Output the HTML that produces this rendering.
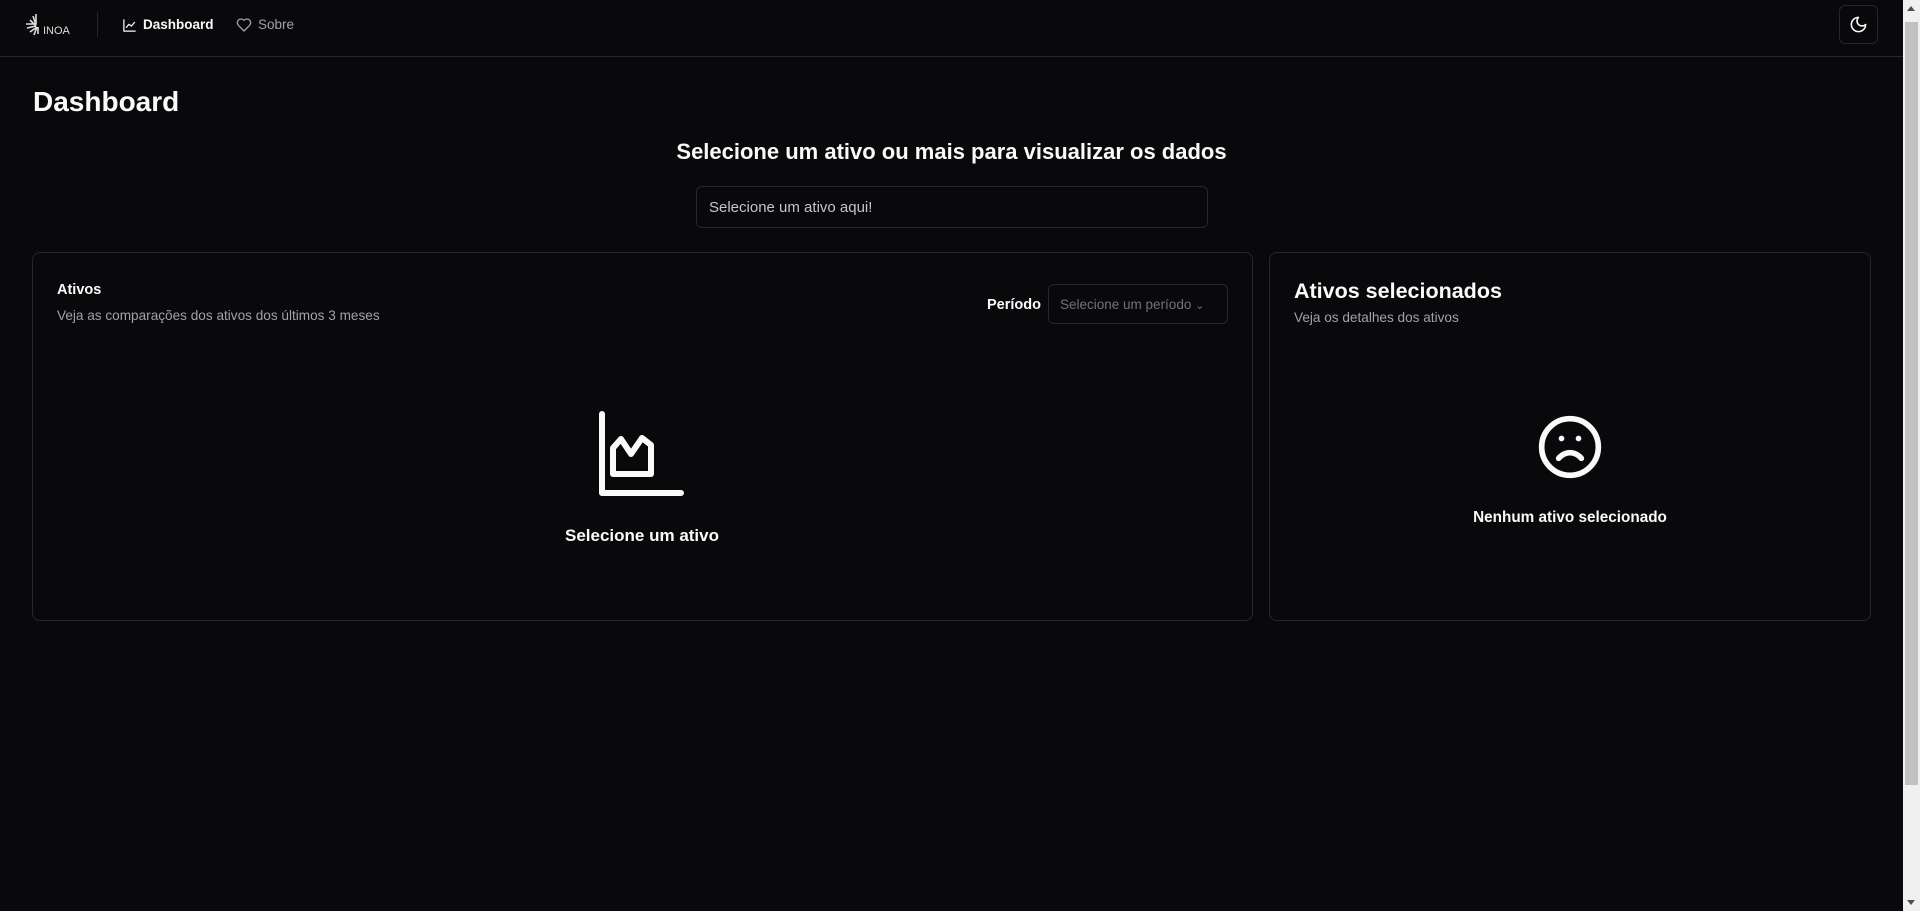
<!DOCTYPE html>
<html><head><meta charset="utf-8"><style>
*{box-sizing:border-box;margin:0;padding:0}
body{width:1920px;height:911px;background:#09090b;color:#fafafa;font-family:"Liberation Sans",sans-serif;position:relative;overflow:hidden}
.abs{position:absolute}
.nav{left:0;top:0;width:1903px;height:57px;border-bottom:1px solid #27272a}
.card{border:1px solid #27272a;border-radius:8px;top:252px;height:369px}
.muted{color:#a1a1aa}
</style></head><body>
<div class="abs nav"></div>
<svg class="abs" style="left:24px;top:12px" width="52" height="26" viewBox="0 0 52 26" fill="none" stroke="#ddd" stroke-width="1.6">
<path d="M12 2v10M9 4l3 9M6 8l6 6M2 12h10M3 16l9-2M6 20l7-5M10 23l3-8M14 22l0-7"/>
<text x="19" y="22" font-family="Liberation Sans" font-size="11" fill="#ddd" stroke="none">INOA</text>
</svg>
<div class="abs" style="left:97px;top:12px;width:1px;height:25px;background:#27272a"></div>
<svg class="abs" style="left:122px;top:18px" width="15" height="15" viewBox="0 0 24 24" fill="none" stroke="#fafafa" stroke-width="2" stroke-linecap="round" stroke-linejoin="round"><path d="M3 3v18h18"/><path d="M7 15l4-5 4 3 5-6"/></svg>
<div class="abs" style="left:143px;top:17px;font-size:13.5px;font-weight:bold">Dashboard</div>
<svg class="abs" style="left:236px;top:17px" width="16" height="16" viewBox="0 0 24 24" fill="none" stroke="#a1a1aa" stroke-width="2" stroke-linejoin="round"><path d="M19 14c1.5-1.5 3-3.2 3-5.5A5.5 5.5 0 0 0 16.5 3c-1.8 0-3 .5-4.5 2-1.5-1.5-2.7-2-4.5-2A5.5 5.5 0 0 0 2 8.5c0 2.3 1.5 4 3 5.5l7 7z"/></svg>
<div class="abs muted" style="left:258px;top:17px;font-size:13.5px">Sobre</div>
<div class="abs" style="left:1839px;top:5px;width:39px;height:39px;border:1px solid #27272a;border-radius:6px"></div>
<svg class="abs" style="left:1849px;top:15px" width="19" height="19" viewBox="0 0 24 24" fill="none" stroke="#fafafa" stroke-width="2" stroke-linecap="round" stroke-linejoin="round"><path d="M12 3a6 6 0 0 0 9 9 9 9 0 1 1-9-9z"/></svg>
<div class="abs" style="left:1903px;top:0;width:17px;height:911px;background:#f0f0f0"></div>
<div class="abs" style="left:1905px;top:22px;width:13px;height:763px;background:#c1c1c1"></div>
<div class="abs" style="left:1907px;top:6px;width:0;height:0;border-left:4px solid transparent;border-right:4px solid transparent;border-bottom:5px solid #505050"></div>
<div class="abs" style="left:1907px;top:900px;width:0;height:0;border-left:4px solid transparent;border-right:4px solid transparent;border-top:5px solid #505050"></div>

<div class="abs" style="left:33px;top:86px;font-size:28px;font-weight:bold">Dashboard</div>
<div class="abs" style="left:0;width:1903px;top:139px;text-align:center;font-size:22px;font-weight:bold">Selecione um ativo ou mais para visualizar os dados</div>
<div class="abs" style="left:696px;top:186px;width:512px;height:42px;border:1px solid #27272a;border-radius:6px;padding:12px 12px;font-size:15px;color:#c4c4cc">Selecione um ativo aqui!</div>

<div class="abs card" style="left:32px;width:1221px"></div>
<div class="abs" style="left:57px;top:282px;font-size:14.5px;font-weight:bold">Ativos</div>
<div class="abs muted" style="left:57px;top:308px;font-size:13.6px">Veja as comparações dos ativos dos últimos 3 meses</div>
<div class="abs" style="left:987px;top:297px;font-size:14.5px;font-weight:bold">Período</div>
<div class="abs" style="left:1048px;top:284px;width:180px;height:40px;border:1px solid #27272a;border-radius:6px;padding:12px 11px;font-size:13.5px;color:#71717a">Selecione um período <span style="font-size:11px">&#8964;</span></div>
<svg class="abs" style="left:598px;top:411px" width="86" height="86" viewBox="0 0 86 86" fill="none" stroke="#fafafa" stroke-width="6" stroke-linecap="round" stroke-linejoin="round"><path d="M4 3v79h79"/><path d="M15 63V37l8-9 10 15 11-16 9 7v29z"/></svg>
<div class="abs" style="left:442px;width:400px;top:526px;text-align:center;font-size:17px;font-weight:bold">Selecione um ativo</div>

<div class="abs card" style="left:1269px;width:602px"></div>
<div class="abs" style="left:1294px;top:279px;font-size:21.5px;font-weight:bold">Ativos selecionados</div>
<div class="abs muted" style="left:1294px;top:310px;font-size:13.6px">Veja os detalhes dos ativos</div>
<svg class="abs" style="left:1536px;top:413px" width="68" height="68" viewBox="0 0 24 24" fill="none" stroke="#fafafa" stroke-width="2" stroke-linecap="round"><circle cx="12" cy="12" r="10"/><path d="M16 16s-1.5-2-4-2-4 2-4 2"/><path d="M9 9h.01M15 9h.01"/></svg>
<div class="abs" style="left:1370px;width:400px;top:509px;text-align:center;font-size:15.3px;font-weight:bold">Nenhum ativo selecionado</div>
</body></html>
